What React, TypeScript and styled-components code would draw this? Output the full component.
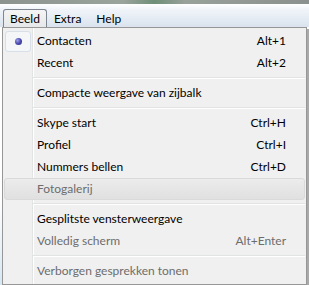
import React from 'react';
import styled, { createGlobalStyle } from 'styled-components';

type Entry =
  | { kind: 'item'; label: string; shortcut?: string; checked?: boolean; disabled?: boolean; hot?: boolean }
  | { kind: 'sep' };

const entries: Entry[] = [
  { kind: 'item', label: 'Contacten', shortcut: 'Alt+1', checked: true },
  { kind: 'item', label: 'Recent', shortcut: 'Alt+2' },
  { kind: 'sep' },
  { kind: 'item', label: 'Compacte weergave van zijbalk' },
  { kind: 'sep' },
  { kind: 'item', label: 'Skype start', shortcut: 'Ctrl+H' },
  { kind: 'item', label: 'Profiel', shortcut: 'Ctrl+I' },
  { kind: 'item', label: 'Nummers bellen', shortcut: 'Ctrl+D' },
  { kind: 'item', label: 'Fotogalerij', disabled: true, hot: true },
  { kind: 'sep' },
  { kind: 'item', label: 'Gesplitste vensterweergave' },
  { kind: 'item', label: 'Volledig scherm', shortcut: 'Alt+Enter', disabled: true },
  { kind: 'sep' },
  { kind: 'item', label: 'Verborgen gesprekken tonen', disabled: true },
];

const GlobalStyle = createGlobalStyle`
  html, body {
    margin: 0;
    padding: 0;
    background: #ffffff;
  }

  body {
    font-family: Lato, "Noto Sans", sans-serif;
    font-size: 12px;
    color: #000;
  }
`;

const Window = styled.div`
  width: 309px;
  height: 285px;
  overflow: hidden;
  background: linear-gradient(to bottom, #ffffff 0, #ffffff 200px, #d6e7f3 285px);
`;

const Chrome = styled.div`
  height: 4px;
  background: linear-gradient(to right, #8d9490 0%, #9aa39c 40%, #6f8f78 50%, #99a19b 60%, #8b918e 100%);
`;

const MenuBar = styled.div`
  height: 23px;
  display: flex;
  align-items: flex-end;
  padding-left: 3px;
  background: linear-gradient(to bottom, #ffffff 0, #f1f5fa 5px, #dae3ee 100%);
`;

const BarItem = styled.div<{ open?: boolean }>`
  height: 18px;
  box-sizing: border-box;
  display: flex;
  align-items: center;
  padding: 0 6px 1px;
  border: 1px solid ${(p) => (p.open ? '#7d8590' : 'transparent')};
  border-bottom: none;
  border-radius: 3px 3px 0 0;
  background: ${(p) => (p.open ? 'linear-gradient(to bottom, #f4f4f4, #e6e8ea)' : 'transparent')};
  margin-right: ${(p) => (p.open ? '0' : '1px')};
`;

const Dropdown = styled.div`
  margin-left: 2px;
  width: 305px;
  box-sizing: border-box;
  border: 1px solid #979797;
  padding: 2px 1px;
  background:
    linear-gradient(
      to right,
      transparent 29px,
      #e2e3e3 29px,
      #e2e3e3 30px,
      #ffffff 30px,
      #ffffff 31px,
      transparent 31px
    ),
    #f0f0f0;
  box-shadow: 2px 2px 0 #a9a9a9;
`;

const Row = styled.div<{ disabled?: boolean; hot?: boolean }>`
  height: 22px;
  box-sizing: border-box;
  display: grid;
  grid-template-columns: 27px 1fr auto;
  align-items: center;
  padding-right: 18px;
  color: ${(p) => (p.disabled ? '#6d6d6d' : '#000000')};
  border: 1px solid ${(p) => (p.hot ? '#dadada' : 'transparent')};
  border-radius: 3px;
  background: ${(p) => (p.hot ? 'linear-gradient(to bottom, #ececec, #e0e0e0)' : 'transparent')};
`;

const CheckCell = styled.div`
  height: 20px;
  display: flex;
  align-items: center;
`;

const CheckBox = styled.div`
  width: 26px;
  height: 21px;
  box-sizing: border-box;
  border: 1px solid #d7dfe8;
  border-radius: 3px;
  background: #f4f6f8;
  display: flex;
  align-items: center;
  justify-content: center;
`;

const Dot = styled.div`
  width: 7px;
  height: 7px;
  border-radius: 50%;
  background: radial-gradient(circle at 35% 35%, #a0a0e6 0, #4a4ab0 50%, #2a2a78 100%);
`;

const Label = styled.span`
  padding-left: 5px;
  white-space: nowrap;
  line-height: 20px;
`;

const Shortcut = styled.span`
  white-space: nowrap;
  line-height: 20px;
`;

const Separator = styled.div`
  height: 8px;
  margin-left: 29px;
  display: flex;
  flex-direction: column;
  justify-content: center;

  &::before {
    content: '';
    height: 1px;
    background: #e2e3e3;
  }

  &::after {
    content: '';
    height: 1px;
    background: #ffffff;
  }
`;

export default function App() {
  return (
    <Window>
      <GlobalStyle />
      <Chrome />
      <MenuBar>
        <BarItem open>Beeld</BarItem>
        <BarItem>Extra</BarItem>
        <BarItem>Help</BarItem>
      </MenuBar>
      <Dropdown>
        {entries.map((e, i) =>
          e.kind === 'sep' ? (
            <Separator key={i} />
          ) : (
            <Row key={i} disabled={e.disabled} hot={e.hot}>
              <CheckCell>
                {e.checked && (
                  <CheckBox>
                    <Dot />
                  </CheckBox>
                )}
              </CheckCell>
              <Label>{e.label}</Label>
              <Shortcut>{e.shortcut}</Shortcut>
            </Row>
          ),
        )}
      </Dropdown>
    </Window>
  );
}
